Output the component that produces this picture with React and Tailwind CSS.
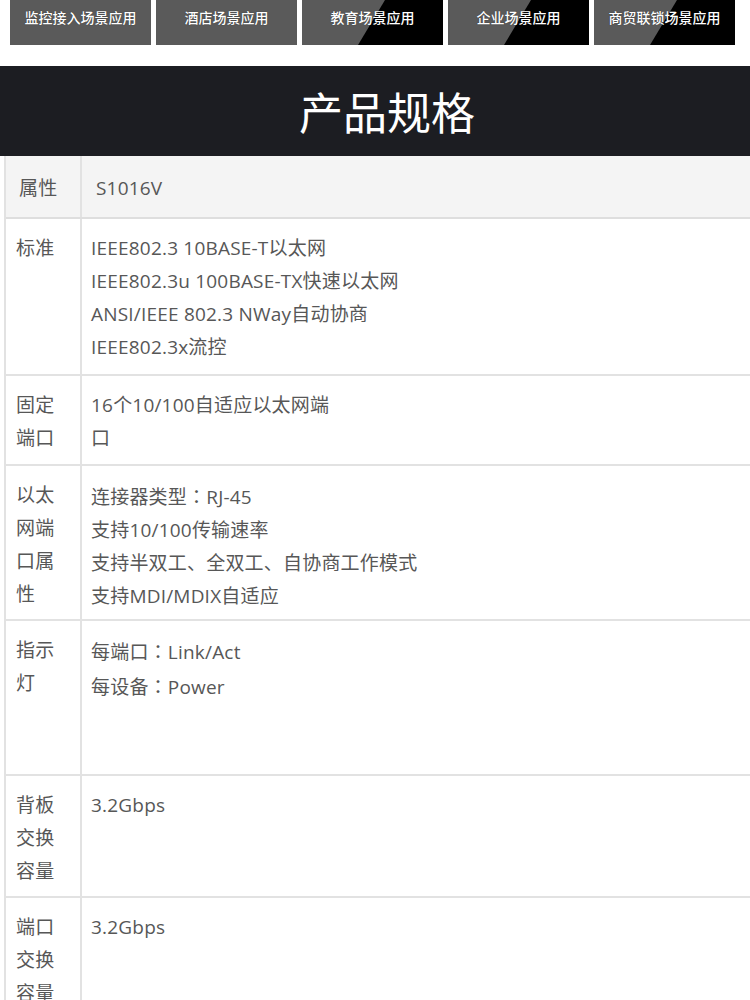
import React from "react";

const tabs = [
  { t: "监控接入场景应用", split: false },
  { t: "酒店场景应用", split: false },
  { t: "教育场景应用", split: true },
  { t: "企业场景应用", split: true },
  { t: "商贸联锁场景应用", split: true },
];

const C = () => <span style={{ fontFamily: '"Noto Sans CJK TC", sans-serif' }}>：</span>;

const rows = [
  { label: ["标准"], lines: ["IEEE802.3 10BASE-T以太网", "IEEE802.3u 100BASE-TX快速以太网", "ANSI/IEEE 802.3 NWay自动协商", "IEEE802.3x流控"], h: "h-[157px]" },
  { label: ["固定", "端口"], lines: ["16个10/100自适应以太网端", "口"], h: "h-[90px]" },
  { label: ["以太", "网端", "口属", "性"], lines: [<>连接器类型<C />RJ-45</>, "支持10/100传输速率", "支持半双工、全双工、自协商工作模式", "支持MDI/MDIX自适应"], h: "h-[155px]" },
  { label: ["指示", "灯"], lines: [<>每端口<C />Link/Act</>, <>每设备<C />Power</>], h: "h-[155px]" },
  { label: ["背板", "交换", "容量"], lines: ["3.2Gbps"], h: "h-[122px]" },
  { label: ["端口", "交换", "容量"], lines: ["3.2Gbps"], h: "h-[122px]" },
];

export default function App() {
  return (
    <div className="w-[750px] h-[1000px] overflow-hidden bg-white" style={{ fontFamily: '"Noto Sans CJK SC", "Noto Sans", sans-serif' }}>
      <div className="flex gap-[5px] pl-[10px] h-[45px]">
        {tabs.map((b) => (
          <div key={b.t} className="relative w-[141px] h-[45px] bg-[#5a5a5a] overflow-hidden">
            {b.split && (
              <div className="absolute inset-0 bg-black [clip-path:polygon(83px_0,100%_0,100%_100%,56px_100%)]" />
            )}
            <div className="relative text-center text-white text-[14px] leading-[20px] pt-[7px] font-medium [text-shadow:0_0_1px_rgba(0,0,0,0.6)]">
              {b.t}
            </div>
          </div>
        ))}
      </div>
      <div className="mt-[21px] h-[90px] bg-[#1c1d22] flex items-center justify-center">
        <div className="text-white text-[44px] leading-none pl-[24px]">产品规格</div>
      </div>
      <div
        className="ml-[4px] border-l-2 border-[#e2e2e2] text-[19px] leading-[33px] text-[#575757] tracking-[0.2px]"
        style={{ fontFamily: '"Open Sans", "Noto Sans CJK SC", sans-serif' }}
      >
        <div className="flex h-[63px] bg-[#f4f4f4] border-b-2 border-[#dedede]">
          <div className="w-[76px] shrink-0 border-r-2 border-[#e2e2e2] pl-[13px] pt-[16px]">属性</div>
          <div className="pl-[14px] pt-[16px]">S1016V</div>
        </div>
        {rows.map((r, i) => (
          <div key={i} className={`flex border-b-2 border-[#e2e2e2] ${r.h}`}>
            <div className="w-[76px] shrink-0 border-r-2 border-[#e2e2e2] pl-[10px] pt-[13px]">
              {r.label.map((l) => (
                <div key={l}>{l}</div>
              ))}
            </div>
            <div className="pl-[9px] pt-[13px]">
              {r.lines.map((l, j) => (
                <div key={j} className="whitespace-nowrap">{l}</div>
              ))}
            </div>
          </div>
        ))}
      </div>
    </div>
  );
}
